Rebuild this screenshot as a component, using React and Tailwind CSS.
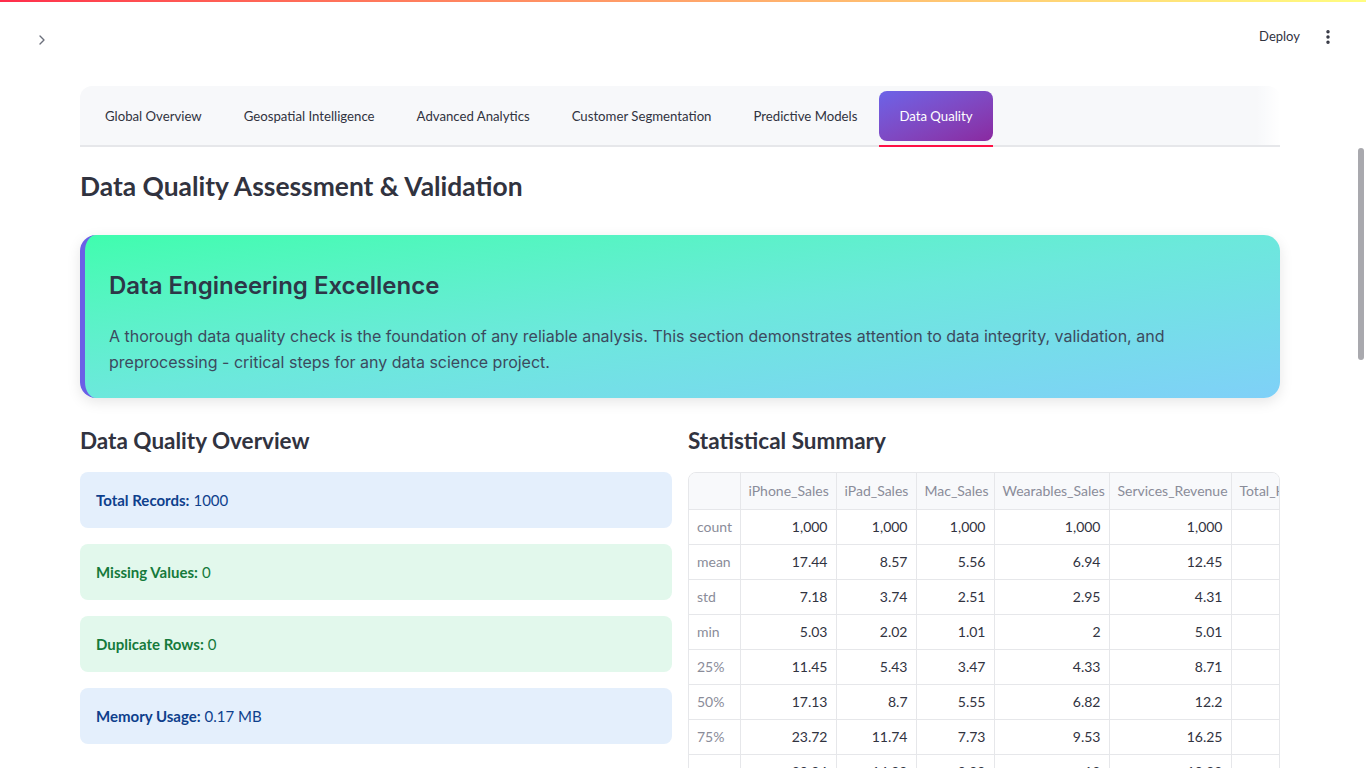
import { ChevronRight, EllipsisVertical } from "lucide-react";

const tabs = [
  "Global Overview",
  "Geospatial Intelligence",
  "Advanced Analytics",
  "Customer Segmentation",
  "Predictive Models",
  "Data Quality",
];

const qualityCards = [
  { label: "Total Records:", value: "1000", tone: "blue" },
  { label: "Missing Values:", value: "0", tone: "green" },
  { label: "Duplicate Rows:", value: "0", tone: "green" },
  { label: "Memory Usage:", value: "0.17 MB", tone: "blue" },
];

const columns = [
  { name: "iPhone_Sales", w: "w-[96px]" },
  { name: "iPad_Sales", w: "w-[80px]" },
  { name: "Mac_Sales", w: "w-[78px]" },
  { name: "Wearables_Sales", w: "w-[115px]" },
  { name: "Services_Revenue", w: "w-[122px]" },
  { name: "Total_Hardware_Sales", w: "w-[156px]" },
];

const stats = [
  ["count", "1,000", "1,000", "1,000", "1,000", "1,000", "1,000"],
  ["mean", "17.44", "8.57", "5.56", "6.94", "12.45", "38.51"],
  ["std", "7.18", "3.74", "2.51", "2.95", "4.31", "8.62"],
  ["min", "5.03", "2.02", "1.01", "2", "5.01", "14.22"],
  ["25%", "11.45", "5.43", "3.47", "4.33", "8.71", "32.3"],
  ["50%", "17.13", "8.7", "5.55", "6.82", "12.2", "38.4"],
  ["75%", "23.72", "11.74", "7.73", "9.53", "16.25", "44.6"],
  ["max", "29.94", "14.99", "9.99", "12", "19.98", "62.17"],
];

const sans = "font-['Lato','Source_Sans_Pro',sans-serif]";

const QualityCard = ({ label, value, tone }) => {
  const styles =
    tone === "blue"
      ? "bg-[#e4effc] text-[#0e3f8c]"
      : "bg-[#e2f8ec] text-[#157a3b]";
  return (
    <div className={`h-[56px] rounded-lg flex items-center px-4 text-[15px] ${styles}`}>
      <span className="font-bold">{label}</span>
      <span className="ml-1">{value}</span>
    </div>
  );
};

const StatsTable = () => (
  <div className="border border-[#e6e7ea] rounded-lg overflow-hidden">
    <table className="border-collapse text-sm table-fixed w-[698px]">
      <thead>
        <tr className="bg-[#f8f9fb] text-[#8a8c99] h-[36px]">
          <th className="w-[51px] border-r border-b border-[#e6e7ea]"></th>
          {columns.map((c, i) => (
            <th
              key={c.name}
              className={`${c.w} px-2 ${
                i === 5 ? "text-left" : "text-right"
              } font-normal border-r border-b border-[#e6e7ea] whitespace-nowrap overflow-hidden`}
            >
              {c.name}
            </th>
          ))}
        </tr>
      </thead>
      <tbody>
        {stats.map((row) => (
          <tr key={row[0]} className="h-[35px]">
            <td className="px-2 text-left text-[#8a8c99] border-r border-b border-[#e6e7ea]">
              {row[0]}
            </td>
            {row.slice(1).map((v, i) => (
              <td
                key={i}
                className="px-2 text-right text-[#31333f] border-r border-b border-[#e6e7ea]"
              >
                {i < 5 ? v : ""}
              </td>
            ))}
          </tr>
        ))}
      </tbody>
    </table>
  </div>
);

export default function App() {
  return (
    <div className={`relative h-[768px] overflow-hidden bg-white text-[#31333f] ${sans}`}>
      <div className="h-[2px] bg-gradient-to-r from-[#ff2b4b] via-[#ffa46a] to-[#fffd80]"></div>

      <header className="h-[58px] flex items-center justify-between pl-[34px] pr-[29px]">
        <ChevronRight size={16} strokeWidth={2} className="text-[#6b6f7b] mt-[18px]" />
        <div className="flex items-center gap-[19px] mt-[11px]">
          <span className="text-[13px] text-[#31333f]">Deploy</span>
          <EllipsisVertical size={18} strokeWidth={2.6} className="text-[#31333f]" />
        </div>
      </header>

      <main className="ml-[80px] w-[1200px] pt-[26px]">
        <div className="relative bg-[#f7f8fa] rounded-t-xl border-b-2 border-[#e6e7ea] pl-[5px] pt-[5px] pb-[4px]">
          <div className="flex gap-[2px]">
            {tabs.map((t) => {
              const active = t === "Data Quality";
              return (
                <div key={t} className="relative">
                  <div
                    className={`h-[50px] px-5 pt-[1px] flex items-center text-[13.2px] rounded-lg whitespace-nowrap ${
                      active
                        ? "bg-gradient-to-br from-[#6b63e8] to-[#8a28a0] text-white"
                        : "text-[#31333f]"
                    }`}
                  >
                    {t}
                  </div>
                  {active && (
                    <div className="absolute left-0 right-0 -bottom-[6px] h-[2px] bg-[#ff1044]"></div>
                  )}
                </div>
              );
            })}
          </div>
          <div className="absolute right-0 top-0 bottom-0 w-[24px] bg-gradient-to-r from-transparent to-white"></div>
        </div>

        <h1 className="mt-[22px] text-[26.4px] font-bold leading-[34px] text-[#31333f]">
          Data Quality Assessment &amp; Validation
        </h1>

        <section className="mt-[32px] h-[163px] rounded-2xl border-l-[5px] border-[#6b5fe6] bg-gradient-to-br from-[#3ffdae] via-[#6ce8dc] to-[#7fd0f8] shadow-[0_4px_14px_rgba(0,0,0,0.1)] pl-[24px] pr-8 pt-[35px] font-['Inter',sans-serif]">
          <h2 className="text-2xl font-semibold text-[#2d3748] leading-[32px]">
            Data Engineering Excellence
          </h2>
          <p className="mt-[21px] text-base leading-[26px] text-[#3c4a5e] max-w-[1080px]">
            A thorough data quality check is the foundation of any reliable analysis. This section demonstrates attention to data integrity, validation, and preprocessing - critical steps for any data science project.
          </p>
        </section>

        <div className="mt-[27px] grid grid-cols-2 gap-4">
          <div>
            <h3 className="text-[22.5px] font-bold leading-[32px] text-[#31333f]">
              Data Quality Overview
            </h3>
            <div className="mt-[15px] flex flex-col gap-4">
              {qualityCards.map((c) => (
                <QualityCard key={c.label} {...c} />
              ))}
            </div>
          </div>
          <div>
            <h3 className="text-[22.5px] font-bold leading-[32px] text-[#31333f]">
              Statistical Summary
            </h3>
            <div className="mt-[15px]">
              <StatsTable />
            </div>
          </div>
        </div>
      </main>

      <div className="absolute right-[2px] top-[148px] h-[212px] w-[6px] rounded-full bg-[#a9a9ae]"></div>
    </div>
  );
}
